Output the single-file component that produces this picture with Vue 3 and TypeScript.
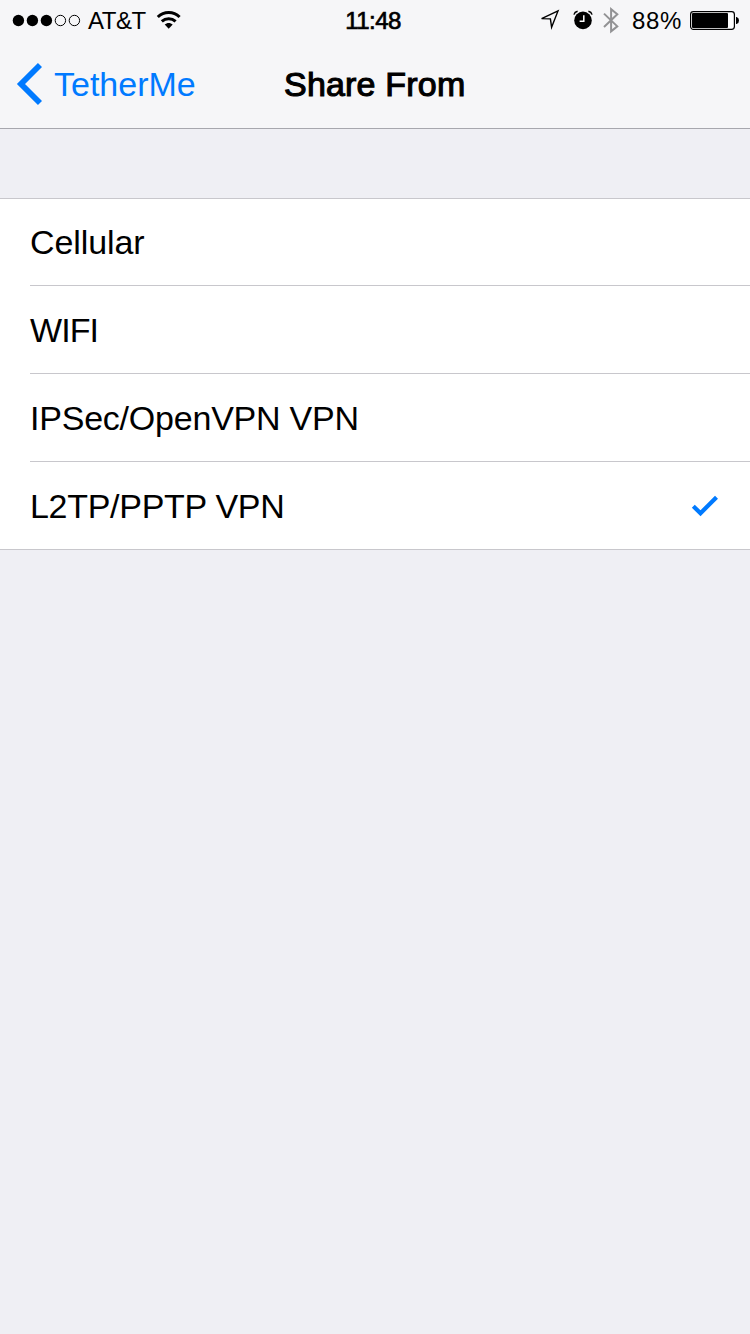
<script setup lang="ts">
import { ref } from 'vue'

interface Source {
  name: string
  tracking: number
}

const sources: Source[] = [
  { name: 'Cellular', tracking: -0.1 },
  { name: 'WIFI', tracking: -0.95 },
  { name: 'IPSec/OpenVPN VPN', tracking: -0.22 },
  { name: 'L2TP/PPTP VPN', tracking: -0.29 },
]
const selected = ref<string>('L2TP/PPTP VPN')
const signal = 3
</script>

<template>
  <div class="screen">
    <header class="header">
      <div class="status">
        <div class="status-left">
          <svg class="dots" width="70" height="40" viewBox="0 0 70 40">
            <circle
              v-for="n in 5"
              :key="n"
              :cx="6.4 + (n - 1) * 14"
              cy="20.5"
              :r="n <= signal ? 5.7 : 5.2"
              :fill="n <= signal ? '#000' : 'none'"
              :stroke="n <= signal ? 'none' : '#000'"
              stroke-width="1"
            />
          </svg>
          <span class="carrier">AT&amp;T</span>
          <svg class="wifi" width="26" height="40" viewBox="0 0 26 40">
            <g fill="none" stroke="#000" stroke-width="3">
              <path d="M1.8 17C8 11 17.4 11 23.6 17" />
              <path d="M5.8 21.4C9.8 17.7 15.6 17.7 19.6 21.4" />
            </g>
            <path d="M8.7 24.6C11 22.3 14.4 22.3 16.7 24.6L12.7 28.8Z" />
          </svg>
        </div>
        <span class="time">11:48</span>
        <div class="status-right">
          <svg width="22" height="40" viewBox="0 0 22 40">
            <path
              d="M2.6 18.6L19 10.9L12.6 27.2L11.4 18.9Z"
              fill="none"
              stroke="#000"
              stroke-width="1.4"
            />
          </svg>
          <svg class="alarm" width="22" height="40" viewBox="0 0 22 40">
            <circle cx="11" cy="20.4" r="8.8" />
            <path d="M1.9 14.6Q2.6 12 5.6 11.3M20.1 14.6Q19.4 12 16.4 11.3" fill="none" stroke="#000" stroke-width="1.4" />
            <path d="M11.8 15.3V21.2H7.6" fill="none" stroke="#fff" stroke-width="1.5" />
          </svg>
          <svg class="bluetooth" width="18" height="40" viewBox="0 0 18 40">
            <path
              d="M2 13.6L15.3 26.4L9.1 31.4V9.2L15.3 14.3L2 27"
              fill="none"
              stroke="#929294"
              stroke-width="2"
            />
          </svg>
          <span class="percent">88%</span>
          <svg class="battery" width="50" height="40" viewBox="0 0 50 40">
            <rect x="0.6" y="11.6" width="43.8" height="17.8" rx="2.8" fill="#fff" stroke="#000" stroke-width="1.2" />
            <rect x="2" y="13" width="36" height="15" rx="1" />
            <path d="M46 17H46.6Q49 17.6 49 20.5T46.6 24H46Z" />
          </svg>
        </div>
      </div>
      <nav class="nav">
        <a class="back">
          <svg width="28" height="48" viewBox="0 0 28 48">
            <path d="M26 5L7 24L26 43" fill="none" stroke="#007aff" stroke-width="5.8" />
          </svg>
          <span>TetherMe</span>
        </a>
        <h1 class="title">Share From</h1>
      </nav>
    </header>
    <ul class="list">
      <li v-for="source in sources" :key="source.name" class="row" @click="selected = source.name">
        <span :style="{ letterSpacing: `${source.tracking}px` }">{{ source.name }}</span>
        <svg v-if="selected === source.name" class="check" width="28" height="24" viewBox="0 0 28 24">
          <path d="M2.3 12.2L9.5 19.2L25.5 3.3" fill="none" stroke="#007aff" stroke-width="4.2" />
        </svg>
      </li>
    </ul>
  </div>
</template>

<style>
body {
  margin: 0;
  background: #efeff4;
}
</style>

<style scoped>
.screen {
  width: 750px;
  height: 1334px;
  overflow: hidden;
  background: #efeff4;
  color: #000;
  font-family: "Liberation Sans", Arial, sans-serif;
}
svg {
  display: block;
  flex: none;
}
.header {
  box-sizing: border-box;
  height: 129px;
  background: #f6f6f8;
  border-bottom: 1px solid #a7a7ae;
}
.status {
  display: grid;
  grid-template-columns: 1fr auto 1fr;
  height: 40px;
  font-size: 24px;
  line-height: 41px;
}
.status-left,
.status-right {
  display: flex;
}
.status-left {
  padding-left: 12px;
}
.carrier {
  width: 60px;
  margin-left: 6px;
  letter-spacing: -0.5px;
}
.wifi {
  margin-left: 8px;
}
.time {
  width: 62px;
  padding-right: 4px;
  box-sizing: border-box;
  text-align: center;
  letter-spacing: -0.6px;
  -webkit-text-stroke: 0.7px #000;
  white-space: nowrap;
}
.status-right {
  justify-content: flex-end;
  padding-right: 10px;
}
.alarm {
  margin-left: 11px;
}
.bluetooth {
  margin-left: 8px;
}
.percent {
  width: 52px;
  margin-left: 12px;
  letter-spacing: 0.7px;
}
.battery {
  margin-left: 6px;
}
.nav {
  display: grid;
  grid-template-columns: 284px 1fr;
  height: 88px;
  font-size: 34px;
  line-height: 40px;
}
.back {
  display: flex;
  padding: 20px 0 0 14px;
  color: #007aff;
}
.back span {
  margin: 4px 0 0 12px;
}
.title {
  margin: 24px 0 0;
  font-size: 34px;
  font-weight: 400;
  letter-spacing: 0.2px;
  -webkit-text-stroke: 1.1px #000;
}
.list {
  margin: 69px 0 0;
  padding: 0 0 0 30px;
  list-style: none;
  background: #fff;
  border-top: 1px solid #c8c7cc;
  border-bottom: 1px solid #c8c7cc;
}
.row {
  box-sizing: border-box;
  display: flex;
  justify-content: space-between;
  height: 88px;
  padding: 24px 31px 0 0;
  border-bottom: 1px solid #c8c7cc;
  font-size: 34px;
  line-height: 40px;
}
.row:first-child {
  height: 87px;
  padding-top: 23px;
}
.row:last-child {
  height: 87px;
  border-bottom: 0;
}
.check {
  margin-top: 8px;
}
</style>
